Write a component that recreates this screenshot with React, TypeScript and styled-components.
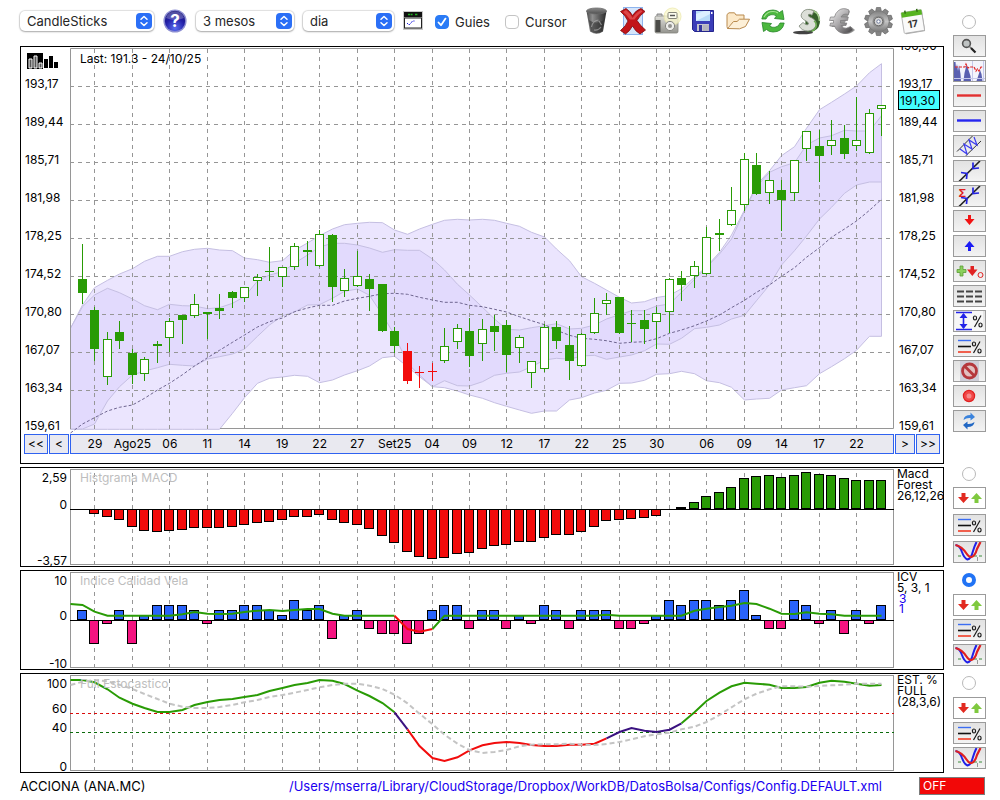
import React, { ReactNode } from 'react';
import styled, { createGlobalStyle } from 'styled-components';

const GREEN = '#299b05';
const RED = '#f20c0c';
const GRID = '#969696';

const GlobalStyle = createGlobalStyle`
  *, *::before, *::after { box-sizing: border-box; }
  body {
    margin: 0;
    background: #fff;
    color: #000;
    font-family: Inter, "Liberation Sans", sans-serif;
    font-size: 12px;
    line-height: 14px;
  }
  button, select, input { font: inherit; color: inherit; margin: 0; }
`;

/* ---------- page frame ---------- */

const Page = styled.div`
  display: grid;
  grid-template-columns: minmax(0, 1fr) 33px;
  grid-template-rows: 43px 418px repeat(3, 100px);
  column-gap: 9px;
  row-gap: 3px;
  padding: 0 14px 0 20px;
`;

const Toolbar = styled.header`
  display: flex;
  align-items: center;
  gap: 9px;
  padding: 0 17px 2px 0;
`;

const Picker = styled.span<{ $width: number }>`
  position: relative;
  width: ${(p) => p.$width}px;
  flex: none;
`;

const PickerSelect = styled.select`
  display: block;
  appearance: none;
  width: 100%;
  height: 20px;
  padding: 0 24px 0 7px;
  border: 0;
  border-radius: 5px;
  background: #fff;
  box-shadow: 0 0 1px 1px rgba(0, 0, 0, 0.12), 0 1px 2px rgba(0, 0, 0, 0.25);
  font-size: 13px;
  line-height: 20px;
  color: #262626;
`;

const Stepper = styled.svg`
  position: absolute;
  right: 2px;
  top: 2px;
  pointer-events: none;
`;

const IconButton = styled.button<{ $size: number }>`
  flex: none;
  width: ${(p) => p.$size}px;
  height: 28px;
  padding: 0;
  border: 0;
  background: none;
  display: grid;
  place-items: center;
  svg { display: block; overflow: visible; }
`;

const Checks = styled.div`
  display: flex;
  gap: 15px;
  padding: 2px 0 0 3px;
`;

const CheckLabel = styled.label`
  display: flex;
  align-items: center;
  gap: 6px;
  font-size: 13px;
  line-height: 16px;
  color: #262626;
`;

const CheckBox = styled.input`
  appearance: none;
  width: 14px;
  height: 14px;
  border: 1px solid #c4c4c4;
  border-radius: 4px;
  background: #fff;
  &:checked {
    border-color: #2a7bf6;
    background: #2a7bf6
      url("data:image/svg+xml,%3Csvg xmlns='http://www.w3.org/2000/svg' viewBox='0 0 12 12'%3E%3Cpath d='M2.5 6.5 5 9.2 9.5 2.6' fill='none' stroke='%23fff' stroke-width='1.8' stroke-linecap='round' stroke-linejoin='round'/%3E%3C/svg%3E")
      center / 12px 12px;
  }
`;

const ToolIcons = styled.div`
  display: flex;
  gap: 7px;
  margin-left: auto;
`;

/* ---------- panels ---------- */

const Panel = styled.section<{ $main?: boolean }>`
  grid-column: 1;
  display: grid;
  grid-template-columns: 49px minmax(0, 1fr) 49px;
  grid-template-rows: ${(p) => (p.$main ? '387px 20px' : '98px')};
  border: 1px solid #000;
  overflow: hidden;
`;

const PlotArea = styled.div`
  position: relative;
`;

const PlotSvg = styled.svg`
  display: block;
  width: 100%;
`;

const PlotTitle = styled.h2<{ $muted?: boolean }>`
  position: absolute;
  left: 10px;
  top: ${(p) => (p.$muted ? 3 : 5)}px;
  margin: 0;
  font-size: 12px;
  font-weight: 400;
  color: ${(p) => (p.$muted ? '#bebebe' : '#000')};
`;

const PriceAxis = styled.div<{ $right?: boolean }>`
  position: relative;
  display: flex;
  flex-direction: column;
  gap: 24px;
  padding-left: ${(p) => (p.$right ? 5 : 4)}px;
  margin-top: ${(p) => (p.$right ? -8 : 0)}px;
  white-space: nowrap;
`;

const Logo = styled.svg`
  display: block;
  margin: 6px 0 -16px 2px;
`;

const LastPrice = styled.output`
  position: absolute;
  left: 4px;
  top: 51px;
  width: 42px;
  height: 20px;
  padding-left: 1px;
  border: 1px solid #000;
  background: #43ffff;
  line-height: 20px;
`;

const DateNav = styled.div<{ $right?: boolean }>`
  display: flex;
  gap: 1px;
  padding-left: ${(p) => (p.$right ? 1 : 3)}px;
`;

const NavButton = styled.button<{ $width: number }>`
  width: ${(p) => p.$width}px;
  height: 20px;
  padding: 0;
  border: 1px solid #2f62f0;
  background: #e9e9f0;
  line-height: 18px;
`;

const DateBar = styled.div`
  display: grid;
  grid-template-columns: repeat(66, minmax(0, 1fr));
  box-shadow: inset 0 0 0 1px #2f62f0;
  background: #e9e9f0;
  line-height: 20px;
`;

const DateLabel = styled.span<{ $day: number }>`
  grid-row: 1;
  grid-column: ${(p) => p.$day} / span 2;
  display: flex;
  justify-content: center;
  white-space: nowrap;
`;

const Legend = styled.div`
  padding-left: 3px;
  line-height: 11px;
  white-space: nowrap;
`;

const LegendValue = styled.div`
  padding: 1px 0 0 2px;
  line-height: 10px;
  color: #1a00f0;
`;

/* ---------- right rail ---------- */

const Rail = styled.aside<{ $main?: boolean; $late?: boolean }>`
  grid-column: 2;
  ${(p) => p.$main && 'grid-row: 1 / span 2; padding-top: 15px;'}
  ${(p) => p.$late && 'padding-top: 3px;'}
  display: flex;
  flex-direction: column;
  align-items: center;
  gap: ${(p) => (p.$main || p.$late ? 3 : 5)}px;
`;

const RadioDot = styled.input<{ $gap: number }>`
  appearance: none;
  flex: none;
  width: 14px;
  height: 14px;
  margin-bottom: ${(p) => p.$gap}px;
  margin-right: 2px;
  border: 1px solid #b9b9b9;
  border-radius: 50%;
  background: #fff;
  &:checked { border: 4px solid #2173f5; }
`;

const RailButton = styled.button<{ $plain?: boolean }>`
  flex: none;
  width: 33px;
  height: 22px;
  padding: 0;
  border: 1px solid #9b9b9b;
  background: ${(p) => (p.$plain ? '#fff' : 'linear-gradient(#e2e2e2, #f3f3f3)')};
  svg { display: block; }
`;

/* ---------- footer ---------- */

const Footer = styled.footer`
  display: flex;
  align-items: center;
  justify-content: space-between;
  height: 25px;
  padding: 0 15px 0 20px;
  font-size: 13px;
`;

const ConfigPath = styled.span`
  flex: 1;
  text-align: right;
  padding-right: 37px;
  color: #1a00f0;
`;

const OffButton = styled.button`
  width: 66px;
  height: 18px;
  padding: 0 0 0 3px;
  border: 1px solid #7b7b7b;
  background: #f20808;
  color: #fff;
  font-size: 12px;
  text-align: left;
  line-height: 16px;
`;

/* ---------- data ---------- */

type Candle = [kind: 'F' | 'H' | 'R', high: number, top: number, bottom: number, low: number];

const CANDLES: Candle[] = [
  ['F', 244, 279, 293, 304], ['F', 307, 310, 349, 361], ['H', 332, 339, 377, 385], ['F', 321, 332, 341, 349],
  ['F', 349, 353, 375, 384], ['H', 357, 359, 374, 381], ['F', 341, 344, 346, 363], ['H', 318, 321, 338, 352],
  ['F', 315, 315, 320, 344], ['H', 294, 304, 316, 318], ['F', 312, 312, 314, 339], ['F', 294, 308, 311, 319],
  ['F', 291, 292, 298, 308], ['H', 287, 287, 298, 302], ['H', 274, 277, 281, 296], ['F', 247, 271, 272, 281],
  ['H', 267, 267, 277, 287], ['H', 243, 246, 267, 270], ['F', 241, 250, 252, 266], ['H', 230, 234, 266, 267],
  ['F', 234, 235, 287, 302], ['H', 269, 278, 291, 297], ['H', 251, 276, 286, 287], ['F', 274, 279, 289, 311],
  ['F', 284, 284, 331, 332], ['F', 327, 331, 346, 353], ['R', 343, 351, 381, 384], ['R', 366, 372, 373, 388],
  ['R', 363, 371, 372, 381], ['H', 328, 346, 361, 363], ['H', 324, 328, 342, 349], ['F', 318, 331, 356, 367],
  ['H', 319, 329, 344, 361], ['F', 315, 326, 332, 351], ['F', 320, 325, 355, 372], ['H', 335, 337, 348, 363],
  ['H', 361, 361, 373, 388], ['H', 324, 327, 369, 372], ['F', 321, 327, 341, 349], ['F', 326, 345, 361, 380],
  ['H', 333, 334, 366, 367], ['H', 298, 313, 333, 334], ['H', 293, 300, 304, 315], ['F', 297, 297, 333, 334],
  ['F', 310, 323, 324, 342], ['F', 310, 320, 329, 344], ['H', 307, 313, 322, 349], ['H', 278, 279, 312, 333],
  ['F', 271, 278, 285, 301], ['H', 261, 266, 276, 288], ['H', 227, 237, 274, 275], ['F', 219, 233, 235, 251],
  ['H', 187, 210, 225, 226], ['H', 153, 159, 205, 211], ['F', 153, 165, 194, 195], ['H', 171, 180, 193, 204],
  ['F', 180, 190, 200, 231], ['H', 160, 160, 193, 201], ['H', 131, 131, 149, 161], ['F', 130, 146, 156, 182],
  ['H', 120, 140, 146, 155], ['F', 125, 138, 154, 159], ['H', 97, 140, 146, 151], ['H', 109, 113, 153, 154],
  ['H', 105, 105, 109, 136],
];

const UPPER_OUTER = [
  328.3, 305, 287.7, 280.3, 274, 268.7, 261.3, 256.3, 256.3, 251.7, 249.3, 248.3, 250, 250.7, 258, 259.7, 262.3,
  260.7, 250.3, 243, 235.7, 229, 224.7, 223.3, 222.3, 222.7, 230, 234.3, 229, 224.3, 220.3, 219.3, 220, 219.3,
  220.3, 223.3, 226.3, 232.3, 237, 249, 260.7, 276.7, 283.3, 290, 297.3, 303, 301.7, 297.5, 295.5, 288.7, 277.3,
  266.7, 252.3, 235, 210, 185, 170.7, 155.7, 146.7, 128.3, 109.7, 102.3, 94, 86, 72.7, 63.7,
];
const UPPER_INNER = [
  328.3, 306.7, 295, 288.3, 292.7, 299, 305.7, 309.7, 304.3, 305.7, 306, 308.7, 307.7, 303.3, 296.7, 281, 275,
  271.7, 263.3, 255, 247, 243.3, 243.3, 245, 248, 252.3, 249.7, 250.3, 250.3, 259, 270, 284.3, 295, 307.3, 319,
  329.3, 330, 327.7, 325.7, 323.7, 329, 328.3, 325, 319, 314.7, 310.7, 310.7, 306, 304, 292.3, 279.3, 267.3, 254,
  239, 211, 186.7, 172.3, 166.7, 162.7, 145, 138, 135.7, 130.3, 131, 131, 115.7,
];
const LOWER_INNER = [
  429, 429, 424, 401, 386.7, 375, 371, 367.7, 364.3, 365.3, 366, 359, 356.7, 354, 349, 336.3, 325, 315.7, 312, 305,
  304.7, 298.3, 291.3, 289, 295.3, 315, 335, 363.3, 375, 386.7, 380.7, 385.7, 386, 381.7, 375.3, 373.3, 372, 366.7,
  360, 358.3, 359.3, 356, 355.3, 359.3, 357, 355, 350.7, 344, 344.3, 338.3, 328.7, 327.3, 325, 319, 315.3, 300.7,
  285, 265, 250.7, 236, 219, 207.3, 193.3, 185, 182, 182,
];
const LOWER_OUTER = [
  429.3, 429.3, 429.3, 429.3, 429.3, 429.3, 429.3, 429.3, 429.3, 429.3, 429.3, 429.3, 429.3, 413.3, 397.7, 383.3,
  378.3, 377, 375.3, 376.3, 382.7, 380, 375, 370.7, 366, 357.7, 356.3, 366.7, 376.7, 386.7, 387.7, 391, 395, 398.3,
  402.7, 406.3, 410, 413.3, 411, 411, 400, 397.7, 393, 390.3, 383.3, 383, 380.3, 374.3, 373.7, 371.3, 373.7, 380.7,
  382.7, 387.3, 400, 399, 398.3, 390, 387.7, 385.7, 373.7, 366.7, 358.7, 350.3, 336.3, 336.3,
];
const AVERAGE = [
  433, 424, 417.7, 411, 407.3, 405, 398.3, 390, 383.3, 374.7, 366, 357.7, 350.3, 342.3, 335, 327, 321.7, 318, 311.7,
  308, 305.3, 305.3, 301, 298.3, 296.3, 293.7, 293.3, 294.3, 297.3, 300, 302.3, 302.3, 305.3, 306.7, 309.3, 312,
  316.7, 320.7, 324.7, 330.3, 335.3, 338.3, 339.3, 340.7, 343.3, 342.3, 341.7, 338.7, 333.3, 330, 325.7, 321, 315,
  307.7, 300.3, 292.3, 285, 276.3, 267.7, 257.3, 247.7, 237.3, 229, 221, 210.3, 199.3,
];

const MACD = [
  0, -5, -8, -11, -18, -22, -23, -22, -21, -19, -19, -19, -18, -16, -14, -13, -11, -8, -8, -6, -11, -14, -16, -20,
  -27, -34, -43, -48, -50, -49, -45, -44, -40, -37, -36, -33, -33, -29, -26, -26, -23, -18, -12, -11, -10, -9, -7, 0,
  3, 8, 14, 18, 23, 32, 34, 35, 33, 35, 38, 36, 35, 32, 30, 30, 30,
];

const QUALITY = [
  2, -5, -1, 2, -5, 1, 3, 3, 3, 2, -1, 2, 2, 3, 3, 2, 1, 4, 2, 3, -4, 1, 2, -2, -3, -3, -5, -3, 2, 3, 3, -2, 2, 2,
  -2, 1, -1, 3, 2, -2, 2, 2, 2, -2, -2, -1, 1, 4, 3, 4, 4, 3, 4, 6, 1, -2, -2, 4, 3, -1, 2, -3, 2, -1, 3,
];

const QUALITY_LINE = [
  33, 34, 40.7, 44.7, 44.7, 44.7, 44.7, 44.7, 44.7, 43.3, 41, 42.7, 43, 42.7, 41, 39.7, 39, 40, 39, 38, 38, 42.7,
  44.7, 44.7, 44.7, 44.7, 44.7, 58, 60.7, 58, 44.7, 44.7, 44.7, 44.7, 44.7, 44.7, 44.7, 44.7, 44.7, 44.7, 44.7, 44.7,
  44.7, 43.7, 44.7, 44.7, 44.7, 44.7, 44.7, 44.7, 39.7, 37.7, 36, 34.7, 32, 33, 37.7, 42.7, 43, 41.3, 42.7, 43.3,
  44.7, 44.7, 44.7, 44.7,
];

const STOCHASTIC = [
  6, 6, 8.3, 15.3, 23.7, 29.7, 34, 38, 38, 36, 31, 28, 26, 25, 23, 21, 17, 14, 11, 9, 6, 6.7, 10, 16.7, 22, 29, 38.3,
  55.3, 72, 84, 87, 83.3, 76.3, 71.3, 69, 68, 69, 71, 72, 72, 70.7, 70.7, 69.7, 64.3, 58, 54, 56.7, 58, 55.7, 49.3,
  38.3, 27, 18.7, 12.3, 8.7, 9.7, 10.7, 14, 14, 13, 8.7, 6.7, 7.7, 9.7, 11.7, 11,
];
const STOCHASTIC_SIGNAL = [
  11, 7.7, 6, 7.3, 10.7, 15, 20, 25, 29.7, 32.7, 34, 34, 33, 31, 28.3, 26, 23, 21, 18.7, 16, 13.3, 11, 9.7, 9.7,
  11.7, 15, 20.7, 29.3, 39.7, 50.3, 60.7, 69.7, 76, 79, 78, 76, 72.3, 70.7, 70.3, 70.3, 69.7, 70.7, 71, 70, 68, 65.3,
  62.3, 60.3, 58.7, 55.3, 52.7, 48, 41, 33.3, 25.3, 19.7, 15.3, 12.3, 12.3, 12.7, 12, 11.3, 10.7, 9.7, 9.7, 9.7,
];

const DATES: [day: number, text: string][] = [
  [2, '29'], [5, 'Ago25'], [8, '06'], [11, '11'], [14, '14'], [17, '19'], [20, '22'], [23, '27'], [26, 'Set25'],
  [29, '04'], [32, '09'], [35, '12'], [38, '17'], [41, '22'], [44, '25'], [47, '30'], [51, '06'], [54, '09'],
  [57, '14'], [60, '17'], [63, '22'],
];
const GRID_DAYS = [...DATES.map(([day]) => day), 48];

const PRICES = ['193,17', '189,44', '185,71', '181,98', '178,25', '174,52', '170,80', '167,07', '163,34', '159,61'];

/* ---------- chart helpers ---------- */

const PLOT_WIDTH = 824;
const dayX = (day: number) => Math.floor(12.485 * day) + 0.5;

const points = (values: number[], from = 0, to = values.length - 1) =>
  values.slice(from, to + 1).map((y, i) => `${dayX(from + i)},${y}`).join(' ');

const band = (upper: number[], lower: number[]) =>
  `${points(upper)} ${points(lower).split(' ').reverse().join(' ')}`;

const VerticalGrid = ({ top, bottom }: { top: number; bottom: number }) => (
  <g stroke={GRID} strokeDasharray="4 4" shapeRendering="crispEdges">
    {GRID_DAYS.map((day) => (
      <line key={day} x1={dayX(day)} x2={dayX(day)} y1={top} y2={bottom} />
    ))}
  </g>
);

const CandleChart = () => (
  <PlotSvg height={387} viewBox={`0 47 ${PLOT_WIDTH} 387`} preserveAspectRatio="none">
    <polygon points={band(UPPER_OUTER, LOWER_OUTER)} fill="#ebe5fe" stroke="#c5bfe2" />
    <polygon points={band(UPPER_INNER, LOWER_INNER)} fill="#e2dafd" stroke="#c5bfe2" />
    <VerticalGrid top={49} bottom={430} />
    <g stroke={GRID} strokeDasharray="4 4" shapeRendering="crispEdges">
      {PRICES.slice(0, 9).map((price, i) => (
        <line key={price} x1={0} x2={PLOT_WIDTH} y1={86.5 + 38 * i} y2={86.5 + 38 * i} />
      ))}
    </g>
    <path d="M.5 429V48.5H823.5V428.5H150" fill="none" stroke={GRID} />
    <polyline points={points(AVERAGE)} fill="none" stroke="#6f6690" strokeDasharray="3 2" />
    {CANDLES.map(([kind, high, top, bottom, low], i) => {
      const x = dayX(i + 1);
      const color = kind === 'R' ? RED : GREEN;
      const hollow = kind === 'H';
      return (
        <g key={i} shapeRendering="crispEdges">
          <line x1={x} x2={x} y1={high} y2={low} stroke={color} />
          <rect
            x={x - (hollow ? 4 : 4.5)}
            y={hollow ? top + 0.5 : top}
            width={hollow ? 8 : 9}
            height={hollow ? bottom - top - 1 : bottom - top}
            fill={hollow ? '#fff' : color}
            stroke={hollow ? color : 'none'}
          />
        </g>
      );
    })}
  </PlotSvg>
);

const PlotFrame = () => <rect x={0.5} y={1.5} width={823} height={95} fill="none" stroke={GRID} />;

const Bar = ({ day, top, bottom, fill }: { day: number; top: number; bottom: number; fill: string }) => (
  <rect x={dayX(day) - 5} y={top + 0.5} width={9} height={bottom - top - 1} fill={fill} stroke="#000" />
);

const MacdChart = () => (
  <PlotSvg height={98} viewBox={`0 0 ${PLOT_WIDTH} 98`} preserveAspectRatio="none">
    <VerticalGrid top={5} bottom={98} />
    <PlotFrame />
    <g shapeRendering="crispEdges">
      {MACD.map((v, i) =>
        v === 0 ? null : v > 0 ? (
          <Bar key={i} day={i + 1} top={42 - v} bottom={41} fill={GREEN} />
        ) : (
          <Bar key={i} day={i + 1} top={41} bottom={41 - v} fill={RED} />
        ),
      )}
      <line x1={0} x2={PLOT_WIDTH} y1={41.5} y2={41.5} stroke="#000" />
    </g>
  </PlotSvg>
);

const QualityChart = () => (
  <PlotSvg height={98} viewBox={`0 0 ${PLOT_WIDTH} 98`} preserveAspectRatio="none">
    <VerticalGrid top={5} bottom={98} />
    <PlotFrame />
    <g shapeRendering="crispEdges">
      {QUALITY.map((v, i) =>
        v > 0 ? (
          <Bar key={i} day={i + 1} top={49 - 5 * v} bottom={49} fill="#2a63fb" />
        ) : (
          <Bar key={i} day={i + 1} top={49} bottom={48 - 5 * v} fill="#f41380" />
        ),
      )}
      <line x1={0} x2={PLOT_WIDTH} y1={49.5} y2={49.5} stroke="#000" />
    </g>
    <g fill="none" strokeWidth={2}>
      <polyline points={points(QUALITY_LINE, 0, 26)} stroke={GREEN} />
      <polyline points={points(QUALITY_LINE, 26, 29)} stroke={RED} />
      <polyline points={points(QUALITY_LINE, 29)} stroke={GREEN} />
    </g>
  </PlotSvg>
);

const StochasticChart = () => (
  <PlotSvg height={98} viewBox={`0 0 ${PLOT_WIDTH} 98`} preserveAspectRatio="none">
    <VerticalGrid top={5} bottom={98} />
    <PlotFrame />
    <g strokeDasharray="3 3" shapeRendering="crispEdges">
      <line x1={0} x2={PLOT_WIDTH} y1={39.5} y2={39.5} stroke="#d90b0b" />
      <line x1={0} x2={PLOT_WIDTH} y1={58.5} y2={58.5} stroke="#0b6b0b" />
    </g>
    <g fill="none" strokeWidth={2}>
      <polyline points={points(STOCHASTIC, 0, 26)} stroke={GREEN} />
      <polyline points={points(STOCHASTIC, 26, 27)} stroke="#3a1280" />
      <polyline points={points(STOCHASTIC, 27, 43)} stroke={RED} />
      <polyline points={points(STOCHASTIC, 43, 49)} stroke="#3a1280" />
      <polyline points={points(STOCHASTIC, 49)} stroke={GREEN} />
      <polyline points={points(STOCHASTIC_SIGNAL)} stroke="#c4c4c4" strokeDasharray="5 3" />
    </g>
  </PlotSvg>
);

const ValueAxis = ({ marks }: { marks: [text: string, y: number][] }) => (
  <svg width={49} height={98} fontSize={12} textAnchor="end">
    {marks.map(([text, y]) => (
      <text key={text} x={46} y={y}>{text}</text>
    ))}
  </svg>
);

/* ---------- toolbar icons ---------- */

const HelpIcon = () => (
  <svg width="24" height="24" viewBox="0 0 24 24">
    <defs>
      <radialGradient id="help" cx=".5" cy=".85" r=".8">
        <stop offset="0" stopColor="#5a6ef0" /><stop offset=".6" stopColor="#2320a8" /><stop offset="1" stopColor="#18147c" />
      </radialGradient>
    </defs>
    <circle cx="12" cy="12" r="11.6" fill="#8d8fd2" />
    <circle cx="12" cy="12" r="10.2" fill="url(#help)" />
    <path d="M3 9a9.4 9.4 0 0 1 18 0Q12 13 3 9" fill="#fff" opacity=".25" />
    <text x="12" y="18" fontSize="17" fontWeight="700" textAnchor="middle" fill="#fff">?</text>
  </svg>
);

const PlotWindowIcon = () => (
  <svg width="20" height="19" viewBox="0 0 20 19">
    <rect width="20" height="19" fill="#c9c9c9" />
    <rect x="1" y="1" width="18" height="5" fill="#111" />
    <path d="M5 3.500h5M12 3.500h3" stroke="#1fae1f" strokeWidth="1.500" strokeDasharray="2 .6" />
    <rect x="1.500" y="7" width="17" height="10" fill="#fff" stroke="#222" />
    <path d="M4 12l2 2 2-2 1.500-2 2 0" fill="none" stroke="#2222e0" strokeDasharray="2 1" />
  </svg>
);

const TrashIcon = () => (
  <svg width="28" height="28" viewBox="0 0 28 28">
    <defs>
      <linearGradient id="bin">
        <stop offset="0" stopColor="#4a4a4a" /><stop offset=".3" stopColor="#8f8f8f" />
        <stop offset=".65" stopColor="#5a5a5a" /><stop offset="1" stopColor="#2a2a2a" />
      </linearGradient>
      <linearGradient id="bin-rim" x2="0" y2="1"><stop offset="0" stopColor="#8a8a8a" /><stop offset="1" stopColor="#505050" /></linearGradient>
    </defs>
    <path d="M2.500 4 6 24.500Q12.500 29 19 24.500L22.500 4Z" fill="url(#bin)" />
    <path d="M5 13q7 5 15 0l-1.800 11Q12.500 28 7 24.500Z" fill="#2b2b2b" opacity=".55" />
    <ellipse cx="12.500" cy="4" rx="10" ry="3" fill="url(#bin-rim)" stroke="#6a6a6a" strokeWidth=".8" />
    <path d="M7.500 20q1-6 7-7M15 14l2.500 4M10 23q4 1 7-3" stroke="#a9a9a9" strokeWidth="1.200" fill="none" opacity=".7" />
  </svg>
);

const DeleteIcon = () => (
  <svg width="28" height="28" viewBox="0 0 28 28">
    <rect x="4.500" y=".5" width="19" height="27" fill="#d5e5fb" stroke="#8db4ee" />
    <path d="M1.500 4.500 7 1.500Q11 4 13.500 8.500 17 3 22 1.500L26 4.500Q21 8 18 13.500q3 5 8.500 9.500L21 27q-5-3-7.500-8Q11 24 6.500 27L1.500 23.500Q7 19 9 14 6 8 1.500 4.500Z" fill="#c2141a" stroke="#7d0a0c" strokeWidth=".8" />
    <path d="M4 5l3-2q4 3 6.500 8Q17 5.500 22 3l1.500 1.500Q17.500 9 15.500 12.500H11Q8 8 4 5Z" fill="#f27070" opacity=".55" />
  </svg>
);

const CameraIcon = () => (
  <svg width="28" height="28" viewBox="0 0 28 28">
    <defs>
      <linearGradient id="cam" x2="0" y2="1"><stop offset="0" stopColor="#deded9" /><stop offset="1" stopColor="#94948e" /></linearGradient>
    </defs>
    <rect x="1" y="9" width="23" height="17" rx="1.500" fill="url(#cam)" stroke="#85857d" strokeWidth=".8" />
    <rect x="1.500" y="13" width="5" height="12" fill="#4b4b48" />
    <path d="M3 9V7h5v2" fill="#bbb" stroke="#888" />
    <circle cx="18.500" cy="9.500" r="8.500" fill="#faf8cc" opacity=".75" stroke="#ece8a6" />
    <rect x="14" y="5.500" width="9" height="6" rx="1" fill="#fbfbee" stroke="#85857a" />
    <path d="M16 8.500h5" stroke="#555" strokeWidth="1.500" />
    <circle cx="16" cy="19" r="4.600" fill="#ededea" stroke="#858580" />
    <circle cx="16" cy="19" r="2" fill="#92928e" />
  </svg>
);

const SaveIcon = () => (
  <svg width="22" height="22" viewBox="0 0 22 22">
    <path d="M.5.5h21v21H2.500l-2-2Z" fill="#3b3db8" stroke="#24258c" />
    <rect x="4" y="1" width="14" height="10" fill="#b9dcf8" />
    <path d="M4 11V4l8-3h6v3Z" fill="#dcf0ff" />
    <rect x="19" y="2" width="1.500" height="2" fill="#fff" />
    <rect x="5" y="14" width="12" height="7" fill="#c3c3cc" />
    <rect x="7" y="15" width="3" height="6" fill="#33359e" />
    <path d="M12 15v6M14 15v6M16 15v6" stroke="#a5a5ae" />
  </svg>
);

const FolderIcon = () => (
  <svg width="24" height="18" viewBox="0 0 24 18">
    <path d="M1 14.500V2.500L3 .8h5.500l1.500 2.200h8v4" fill="#fce9c9" stroke="#b98a4e" />
    <path d="M1.500 16.500 7.500 9.500H11l2.500-2.300h10l-4 7.300-6 2.300Z" fill="#fdf0d8" stroke="#b98a4e" strokeLinejoin="round" />
    <path d="M1 14.500l.5 2" stroke="#b98a4e" />
  </svg>
);

const ReloadIcon = () => (
  <svg width="24" height="24" viewBox="0 0 24 24">
    <path d="M.8 10Q2.500 1 12 1q4 0 6.500 2.500L21.500 1.500 23 10.500 13.500 9.500 15.500 7Q13 5.200 10 5.700 6 6.400 5 10Z" fill="#4cb83e" stroke="#27862a" strokeWidth=".8" />
    <path d="M23.200 14Q21.500 23 12 23q-4 0-6.500-2.500L2.500 22.500 1 13.500 10.500 14.500 8.500 17Q11 18.800 14 18.300 18 17.600 19 14Z" fill="#4cb83e" stroke="#27862a" strokeWidth=".8" />
    <path d="M3 8Q6 2.500 12 2.500q3 0 5 1.500" fill="none" stroke="#a5e292" strokeWidth="1.200" />
  </svg>
);

const DollarIcon = () => (
  <svg width="28" height="28" viewBox="0 0 28 28">
    <ellipse cx="9" cy="25.500" rx="10" ry="1.800" fill="#222" opacity=".85" />
    <path d="M12 3Q24 .5 26 12q.5 9-6 12-5 2-9-.5Z" fill="#35602a" />
    <path d="M15 2.500Q25 4 25.500 14" fill="none" stroke="#a9cf92" strokeWidth="1.500" />
    <path d="M20 4Q13 .5 9 4.500 5 9 9.500 12.500 15 15 14.500 17q-1.500 2-5.500-1.500L5 19q3 5 9 5 6-.5 8-5.500 1-5-4-7.500-4.500-1.500-3.500-3.500 1.500-1 3.500.8Z" fill="#dcdfd8" stroke="#7f887a" strokeWidth=".8" />
    <path d="M20 14q3 2 2 6-1 3-4 4" fill="none" stroke="#6cae50" strokeWidth="1.500" />
  </svg>
);

const EuroIcon = () => (
  <svg width="28" height="28" viewBox="0 0 28 28">
    <defs>
      <linearGradient id="euro" x2="1" y2="1"><stop offset="0" stopColor="#f6f6f6" /><stop offset=".5" stopColor="#a9a7a9" /><stop offset="1" stopColor="#3d3b3d" /></linearGradient>
    </defs>
    <path d="M21 4.500Q16 1 11 4 7 7 6.500 11L3 11 2 14H6V17L3 17 2.500 20H7Q10 27 17 27q5 0 9-4L22.500 20Q17 24 13.500 21Z" fill="#555" opacity=".6" />
    <path d="M20 3Q14 0 9.500 3.500 6 6.500 5.500 10L1.500 10 .5 13.500H4.500V16L1.500 16 .8 19H5.500Q8 26 15.500 26.500q5 0 8.500-3.500L21.500 19.500Q17 22.500 13.500 20.500q-1-.7-1.500-2H17l.8-2.500H11.500V13.500h7l.8-3.500H12Q14 6 19.500 7.500Z" fill="url(#euro)" stroke="#7d7b7d" strokeWidth=".7" />
  </svg>
);

const GearIcon = () => (
  <svg width="29" height="29" viewBox="0 0 29 29">
    <defs>
      <linearGradient id="gear" x2="0" y2="1"><stop offset="0" stopColor="#808080" /><stop offset=".5" stopColor="#c4c4c4" /><stop offset="1" stopColor="#757575" /></linearGradient>
    </defs>
    <g fill="#858585" stroke="#5c5c5c" strokeWidth=".6">
      {Array.from({ length: 10 }, (_, i) => (
        <path key={i} d="M11.500 4.500 12.500.5h4l1 4Z" transform={`rotate(${i * 36} 14.500 14.500)`} />
      ))}
    </g>
    <circle cx="14.500" cy="14.500" r="10.600" fill="url(#gear)" stroke="#777" strokeWidth=".6" />
    <circle cx="14.500" cy="14.500" r="6" fill="#8f8f8f" />
    <circle cx="14.500" cy="14.500" r="4.300" fill="#d6d6d6" stroke="#666" strokeWidth="1" />
    <circle cx="14.500" cy="14.500" r="1.700" fill="#fff" stroke="#55658b" strokeWidth=".8" />
  </svg>
);

const CalendarIcon = () => (
  <svg width="26" height="26" viewBox="0 0 26 26">
    <g transform="rotate(-9 13 13)">
      <rect x="3.500" y="4" width="20" height="21" rx="1" fill="#777" opacity=".6" />
      <rect x="2.500" y="3" width="20.500" height="21" rx="1" fill="#fafafa" stroke="#aaa" strokeWidth=".8" />
      <path d="M2.500 3h20.500v5H2.500Z" fill="#56b320" />
      <path d="M6.500 1.500v3M18.500 1.500v3" stroke="#2d6a10" strokeWidth="1.500" />
      <text x="12.500" y="19.500" fontSize="10" fontWeight="700" textAnchor="middle" fill="#333">17</text>
    </g>
  </svg>
);

/* ---------- rail icons ---------- */

const RailIcon = ({ children }: { children: ReactNode }) => (
  <svg width="31" height="20" viewBox="0 0 31 20" fill="none">{children}</svg>
);

const Percent = ({ x, y }: { x: number; y: number }) => (
  <g stroke="#1a1a1a" strokeWidth="1.200">
    <ellipse cx={x + 2} cy={y - 9} rx="1.600" ry="2" />
    <ellipse cx={x + 7.5} cy={y - 2} rx="1.600" ry="2" />
    <path d={`M${x + 8} ${y - 11.5}L${x + 1.5} ${y}`} />
  </g>
);

const SearchGlyph = () => (
  <RailIcon>
    <circle cx="12.500" cy="7.500" r="3.900" fill="#bfc3c3" stroke="#555" strokeWidth="1.600" />
    <path d="M15.500 10.500 17 12" stroke="#777" strokeWidth="1.500" />
    <path d="M17 12l4.500 4.500" stroke="#222" strokeWidth="2.200" />
  </RailIcon>
);

const VolumeGlyph = () => (
  <RailIcon>
    <rect width="31" height="20" fill="#f3f4fc" />
    <path d="M0 20V1h1.500l.5 6 1-4 1 7 1-6 1.500 9 .5 7ZM9.500 20l1-8 2-8 2 5 2 6 .5 5ZM22.500 20l2-6 1.500-5 1.500 4 1 7Z" fill="#5a60b0" />
    <path d="M18.500 0v20M29.500 0v20M0 17.500h31" stroke="#c5c8ea" />
    <path d="M1 6h10l1-3 2 4 2-1h4l2 4 1.500-2L25 10l2-4h2" stroke="#e22424" strokeWidth="1.200" strokeDasharray="3 1" />
  </RailIcon>
);

const LineGlyph = ({ color }: { color: string }) => (
  <RailIcon><path d="M3 9.500h24" stroke={color} strokeWidth="2.400" /></RailIcon>
);

const ChannelGlyph = () => (
  <RailIcon>
    <path d="M3 15.500 18.500 0M11.500 20 27 5" stroke="#333" />
    <path d="M6 13l7 5-3-10 8 5-3-9 8 5-3-8" stroke="#3c3cf0" strokeWidth="1.200" />
  </RailIcon>
);

const SqueezePaths = () => (
  <>
    <path d="M5 20.500 26 0" stroke="#222" strokeWidth="1.600" />
    <path d="M7 11.500l6 1-.5 5.500M19 1.500v6l6-.5" stroke="#2424e0" strokeWidth="1.700" />
  </>
);

const SqueezeGlyph = () => <RailIcon><SqueezePaths /></RailIcon>;

const SumGlyph = () => (
  <RailIcon>
    <SqueezePaths />
    <text x="4.500" y="11" fontSize="11" fontWeight="700" fill="#e02020">Σ</text>
  </RailIcon>
);

const DOWN = 'M14 4h3v4h3.500l-5 6-5-6H14Z';
const UP = 'M14 15h3v-4h3.500l-5-6-5 6H14Z';

const DownGlyph = () => <RailIcon><path d={DOWN} fill="#f21313" /></RailIcon>;
const UpGlyph = () => <RailIcon><path d={UP} fill="#1c1cf5" /></RailIcon>;

const AddArrowGlyph = () => (
  <RailIcon>
    <path d="M6 5h3v3.500h3v3H9V15H6v-3.500H3v-3h3Z" fill="#8bd05c" stroke="#5a9c35" strokeWidth=".8" />
    <path d="M16.500 5h3.500v3.500h3.500L18.300 15 13 8.500h3.500Z" fill="#e02222" />
    <circle cx="26.500" cy="14" r="2.500" stroke="#e02222" />
  </RailIcon>
);

const DashesGlyph = () => (
  <RailIcon>
    <path d="M3 5.500h25M3 10.500h25M3 15.500h25" stroke="#444" strokeWidth="1.800" strokeDasharray="7 2" />
  </RailIcon>
);

const RangeGlyph = () => (
  <RailIcon>
    <rect x="1" width="28" height="20" fill="#f7f7f7" />
    <path d="M2 1.500h16M2 18.500h16M9.500 3v14" stroke="#2424e8" strokeWidth="1.600" />
    <path d="M9.500 2l4 5h-8ZM9.500 18l4-5h-8Z" fill="#2424e8" />
    <Percent x={19} y={16} />
  </RailIcon>
);

const LevelsGlyph = () => (
  <RailIcon>
    <path d="M4 4.500h13" stroke="#3b6df2" strokeWidth="1.400" />
    <path d="M4 10.500h13" stroke="#111" strokeWidth="1.600" />
    <path d="M4 16h13" stroke="#f0604e" strokeWidth="2" />
    <Percent x={18} y={17} />
  </RailIcon>
);

const ForbiddenGlyph = () => (
  <RailIcon>
    <rect x="6" width="19" height="20" fill="#cfcfd8" />
    <circle cx="15.500" cy="10" r="7" fill="#e2c0c0" stroke="#b5383c" strokeWidth="2.800" />
    <path d="M10.500 5l10 10" stroke="#b5383c" strokeWidth="2.800" />
  </RailIcon>
);

const RecordGlyph = () => (
  <RailIcon>
    <circle cx="15" cy="10" r="5.600" fill="#f04848" stroke="#e02020" strokeWidth="1.200" />
    <circle cx="15" cy="10" r="2.500" fill="#f78a8a" />
  </RailIcon>
);

const SyncGlyph = () => (
  <RailIcon>
    <path d="M9.500 9q.5-5 7-5V1.500L21 6l-4.500 3.500V7q-4-.5-7 2Z" fill="#3b83dc" />
    <path d="M20.500 11q-.5 5-7 5v2.500L9 14l4.500-3.500V13q4 .5 7-2Z" fill="#2268c4" />
  </RailIcon>
);

const SwapGlyph = () => (
  <RailIcon>
    <path d="M7.500 5h4v4H15l-5.500 6L4 9h3.500Z" fill="#e22a20" />
    <path d="M20.500 15h4v-4H28l-5.500-6L17 11h3.500Z" fill="#7fc93f" />
  </RailIcon>
);

const CrossGlyph = () => (
  <RailIcon>
    <path d="M4 14h6M20 14h8" stroke="#3c8c3c" strokeDasharray="3 2" />
    <path d="M23.500 15v4" stroke="#999" />
    <path d="M1.500 3Q6 3.500 8 10q2 6 5.500 7.500Q17 17 19 9q1.500-5 3.500-9" stroke="#2020e8" strokeWidth="2" />
    <path d="M1.500 3Q8 4.500 12.500 11.500 15 15.500 17.500 15 21 14 23 7l3.500-7" stroke="#e02020" strokeWidth="2.200" />
  </RailIcon>
);

/* ---------- composition ---------- */

const Dropdown = ({ label, width, options }: { label: string; width: number; options: string[] }) => (
  <Picker $width={width}>
    <PickerSelect aria-label={label}>
      {options.map((option) => <option key={option}>{option}</option>)}
    </PickerSelect>
    <Stepper width="16" height="16" viewBox="0 0 16 16">
      <rect width="16" height="16" rx="4" fill="#2b6ff6" />
      <path d="M5 6.300 8 3.500l3 2.800M5 9.700l3 2.800 3-2.800" fill="none" stroke="#fff" strokeWidth="1.500" strokeLinecap="round" strokeLinejoin="round" />
    </Stepper>
  </Picker>
);

const TOOL_ICONS: [label: string, Icon: () => React.JSX.Element][] = [
  ['Paperera', TrashIcon], ['Esborrar', DeleteIcon], ['Captura', CameraIcon], ['Desar', SaveIcon],
  ['Obrir', FolderIcon], ['Actualitzar', ReloadIcon], ['Dòlar', DollarIcon], ['Euro', EuroIcon],
  ['Configuració', GearIcon], ['Calendari', CalendarIcon],
];

const DRAW_TOOLS: [label: string, icon: ReactNode][] = [
  ['Zoom', <SearchGlyph />], ['Volum', <VolumeGlyph />], ['Línia vermella', <LineGlyph color="#e23030" />],
  ['Línia blava', <LineGlyph color="#2626f0" />], ['Canal', <ChannelGlyph />], ['Tendència', <SqueezeGlyph />],
  ['Suma', <SumGlyph />], ['Baixa', <DownGlyph />], ['Puja', <UpGlyph />], ['Afegir senyal', <AddArrowGlyph />],
  ['Guions', <DashesGlyph />], ['Rang', <RangeGlyph />], ['Nivells', <LevelsGlyph />],
  ['Prohibit', <ForbiddenGlyph />], ['Gravar', <RecordGlyph />], ['Sincronitzar', <SyncGlyph />],
];

const IndicatorRail = ({ name, late, checked }: { name: string; late?: boolean; checked?: boolean }) => (
  <Rail $late={late}>
    <RadioDot type="radio" name="panel" aria-label={name} defaultChecked={checked} $gap={late ? 4 : 1} />
    <RailButton $plain aria-label={`${name}: senyals`}><SwapGlyph /></RailButton>
    <RailButton aria-label={`${name}: nivells`}><LevelsGlyph /></RailButton>
    <RailButton aria-label={`${name}: creuaments`}><CrossGlyph /></RailButton>
  </Rail>
);

export default function App() {
  return (
    <>
      <GlobalStyle />
      <Page>
        <Toolbar>
          <Dropdown label="Tipus" width={134} options={['CandleSticks']} />
          <IconButton $size={24} aria-label="Ajuda"><HelpIcon /></IconButton>
          <Dropdown label="Període" width={98} options={['3 mesos']} />
          <Dropdown label="Interval" width={91} options={['dia']} />
          <IconButton $size={20} aria-label="Finestra"><PlotWindowIcon /></IconButton>
          <Checks>
            <CheckLabel><CheckBox type="checkbox" defaultChecked />Guies</CheckLabel>
            <CheckLabel><CheckBox type="checkbox" />Cursor</CheckLabel>
          </Checks>
          <ToolIcons>
            {TOOL_ICONS.map(([label, Icon]) => (
              <IconButton key={label} $size={28} aria-label={label}><Icon /></IconButton>
            ))}
          </ToolIcons>
        </Toolbar>

        <Rail $main>
          <RadioDot type="radio" name="panel" aria-label="Preu" $gap={3} />
          {DRAW_TOOLS.map(([label, icon]) => (
            <RailButton key={label} aria-label={label}>{icon}</RailButton>
          ))}
        </Rail>

        <Panel $main>
          <PriceAxis>
            <Logo width="32" height="16" viewBox="0 0 32 16">
              <rect width="16" height="16" />
              <path d="M2 6h3v9H2zM7 3h3v12H7zM12 10h3v5h-3z" fill="#555" stroke="#fff" />
              <path d="M17 6h4v9h-4zM22 3h4v12h-4zM27 9h4v6h-4z" />
            </Logo>
            {PRICES.map((price) => <span key={price}>{price}</span>)}
          </PriceAxis>
          <PlotArea>
            <CandleChart />
            <PlotTitle>Last: 191.3 - 24/10/25</PlotTitle>
          </PlotArea>
          <PriceAxis $right>
            {['196,90', ...PRICES].map((price) => <span key={price}>{price}</span>)}
            <LastPrice>191,30</LastPrice>
          </PriceAxis>
          <DateNav>
            <NavButton $width={24}>&lt;&lt;</NavButton>
            <NavButton $width={20}>&lt;</NavButton>
          </DateNav>
          <DateBar>
            {DATES.map(([day, text]) => <DateLabel key={day} $day={day}>{text}</DateLabel>)}
          </DateBar>
          <DateNav $right>
            <NavButton $width={20}>&gt;</NavButton>
            <NavButton $width={24}>&gt;&gt;</NavButton>
          </DateNav>
        </Panel>

        <Panel>
          <ValueAxis marks={[['2,59', 14], ['0', 41], ['-3,57', 97]]} />
          <PlotArea>
            <MacdChart />
            <PlotTitle $muted>Histgrama MACD</PlotTitle>
          </PlotArea>
          <Legend>Macd<br />Forest<br />26,12,26</Legend>
        </Panel>
        <IndicatorRail name="MACD" />

        <Panel>
          <ValueAxis marks={[['10', 14], ['0', 49], ['-10', 97]]} />
          <PlotArea>
            <QualityChart />
            <PlotTitle $muted>Indice Calidad Vela</PlotTitle>
          </PlotArea>
          <Legend>
            ICV<br />5, 3, 1
            <LegendValue>3<br />1</LegendValue>
          </Legend>
        </Panel>
        <IndicatorRail name="ICV" late checked />

        <Panel>
          <ValueAxis marks={[['100', 14], ['60', 39], ['40', 58], ['0', 97]]} />
          <PlotArea>
            <StochasticChart />
            <PlotTitle $muted>Full Estocastico</PlotTitle>
          </PlotArea>
          <Legend>EST. %<br />FULL<br />(28,3,6)</Legend>
        </Panel>
        <IndicatorRail name="Estocastico" late />
      </Page>

      <Footer>
        <span>ACCIONA (ANA.MC)</span>
        <ConfigPath>/Users/mserra/Library/CloudStorage/Dropbox/WorkDB/DatosBolsa/Configs/Config.DEFAULT.xml</ConfigPath>
        <OffButton>OFF</OffButton>
      </Footer>
    </>
  );
}
